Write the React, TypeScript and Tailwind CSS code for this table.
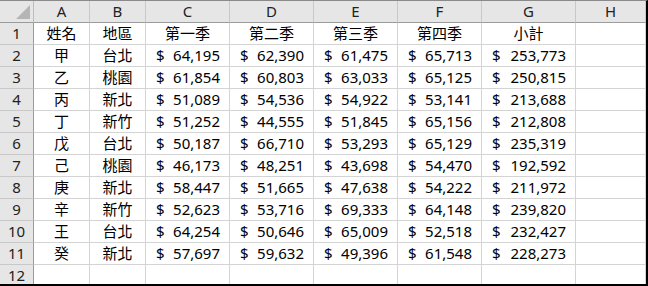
import React from 'react';

const cols = ['A', 'B', 'C', 'D', 'E', 'F', 'G', 'H'];

const rows: [string, string, number, number, number, number, number][] = [
  ['甲', '台北', 64195, 62390, 61475, 65713, 253773],
  ['乙', '桃園', 61854, 60803, 63033, 65125, 250815],
  ['丙', '新北', 51089, 54536, 54922, 53141, 213688],
  ['丁', '新竹', 51252, 44555, 51845, 65156, 212808],
  ['戊', '台北', 50187, 66710, 53293, 65129, 235319],
  ['己', '桃園', 46173, 48251, 43698, 54470, 192592],
  ['庚', '新北', 58447, 51665, 47638, 54222, 211972],
  ['辛', '新竹', 52623, 53716, 69333, 64148, 239820],
  ['王', '台北', 64254, 50646, 65009, 52518, 232427],
  ['癸', '新北', 57697, 59632, 49396, 61548, 228273],
];

const titles = ['姓名', '地區', '第一季', '第二季', '第三季', '第四季', '小計'];

const gridCols = 'grid grid-cols-[34px_56px_56px_84px_84px_84px_84px_94px_70px]';

const RowHead = ({ n }: { n: number }) => (
  <div className="h-[22px] flex items-center justify-center bg-[#e6e6e6] border-r border-b border-r-[#9b9b9b] border-b-[#c8c8c8] text-[#222]">
    {n}
  </div>
);

const Cell = ({ children, center = true }: { children?: React.ReactNode; center?: boolean }) => (
  <div className={`h-[22px] flex items-center border-r border-b border-[#d4d4d4] ${center ? 'justify-center' : ''}`}>
    {children}
  </div>
);

const Money = ({ v }: { v: number }) => (
  <div className="h-[22px] flex items-center justify-between pl-[10px] pr-[9px] border-r border-b border-[#d4d4d4]">
    <span>$</span>
    <span>{v.toLocaleString('en-US')}</span>
  </div>
);

export default function App() {
  return (
    <div
      className="w-[648px] h-[286px] overflow-hidden bg-white border-t border-t-[#8a8a8a] border-r-2 border-b-2 border-r-black border-b-black text-[15px] leading-none text-black"
      style={{ fontFamily: '"Noto Sans", "Noto Sans CJK TC", sans-serif' }}
    >
      <div className={gridCols}>
        <div className="h-[22px] relative bg-[#e6e6e6] border-r border-b border-r-[#bdbdbd] border-b-[#9b9b9b]">
          <div className="absolute right-[3px] bottom-[3px] w-0 h-0 border-l-[14px] border-t-[14px] border-l-transparent border-t-transparent border-b-0 border-r-0 border-r-transparent" style={{ borderBottom: '14px solid #b5b5b5', borderLeft: '14px solid transparent', borderTop: 0 }} />
        </div>
        {cols.map((c) => (
          <div
            key={c}
            className="h-[22px] flex items-center justify-center bg-[#e6e6e6] border-r border-b border-r-[#c8c8c8] border-b-[#9b9b9b] text-[#222]"
          >
            {c}
          </div>
        ))}

        <RowHead n={1} />
        {titles.map((t) => (
          <Cell key={t}>{t}</Cell>
        ))}
        <Cell />

        {rows.map((r, i) => (
          <React.Fragment key={i}>
            <RowHead n={i + 2} />
            <Cell>{r[0]}</Cell>
            <Cell>{r[1]}</Cell>
            <Money v={r[2]} />
            <Money v={r[3]} />
            <Money v={r[4]} />
            <Money v={r[5]} />
            <Money v={r[6]} />
            <Cell />
          </React.Fragment>
        ))}

        <RowHead n={12} />
        {cols.map((c) => (
          <Cell key={c} />
        ))}
      </div>
    </div>
  );
}
